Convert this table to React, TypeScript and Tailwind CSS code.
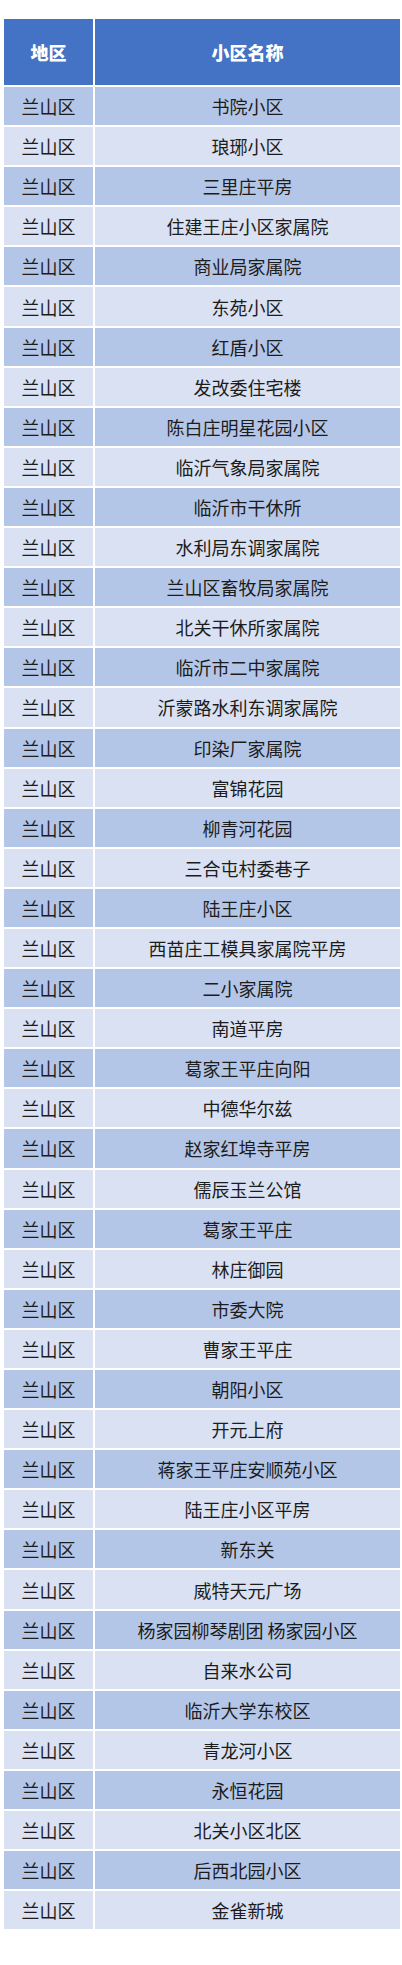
import React from "react";

const names = [
  "书院小区",
  "琅琊小区",
  "三里庄平房",
  "住建王庄小区家属院",
  "商业局家属院",
  "东苑小区",
  "红盾小区",
  "发改委住宅楼",
  "陈白庄明星花园小区",
  "临沂气象局家属院",
  "临沂市干休所",
  "水利局东调家属院",
  "兰山区畜牧局家属院",
  "北关干休所家属院",
  "临沂市二中家属院",
  "沂蒙路水利东调家属院",
  "印染厂家属院",
  "富锦花园",
  "柳青河花园",
  "三合屯村委巷子",
  "陆王庄小区",
  "西苗庄工模具家属院平房",
  "二小家属院",
  "南道平房",
  "葛家王平庄向阳",
  "中德华尔兹",
  "赵家红埠寺平房",
  "儒辰玉兰公馆",
  "葛家王平庄",
  "林庄御园",
  "市委大院",
  "曹家王平庄",
  "朝阳小区",
  "开元上府",
  "蒋家王平庄安顺苑小区",
  "陆王庄小区平房",
  "新东关",
  "威特天元广场",
  "杨家园柳琴剧团 杨家园小区",
  "自来水公司",
  "临沂大学东校区",
  "青龙河小区",
  "永恒花园",
  "北关小区北区",
  "后西北园小区",
  "金雀新城",
];

export default function App() {
  return (
    <div
      className="w-[402px] h-[1965px] bg-white pt-[19px] pl-[4px] pr-[2px] text-[#1c1c1c]"
      style={{ fontFamily: '"Noto Sans CJK SC", "Noto Sans", sans-serif' }}
    >
      <div className="flex flex-col gap-[2px] bg-white">
        <div className="grid grid-cols-[89px_1fr] gap-[2px] h-[66px]">
          <div className="bg-[#4472c4] flex items-center justify-center text-white font-black text-[18px]">
            地区
          </div>
          <div className="bg-[#4472c4] flex items-center justify-center text-white font-black text-[18px]">
            小区名称
          </div>
        </div>
        {names.map((n, i) => {
          const bg = i % 2 === 0 ? "bg-[#b4c6e7]" : "bg-[#d9e1f2]";
          return (
            <div key={i} className="grid grid-cols-[89px_1fr] gap-[2px] h-[38.1px]">
              <div className={`${bg} flex items-center justify-center text-[18px] leading-none`}>
                兰山区
              </div>
              <div className={`${bg} flex items-center justify-center text-[18px] leading-none whitespace-pre`}>
                {n}
              </div>
            </div>
          );
        })}
      </div>
    </div>
  );
}
